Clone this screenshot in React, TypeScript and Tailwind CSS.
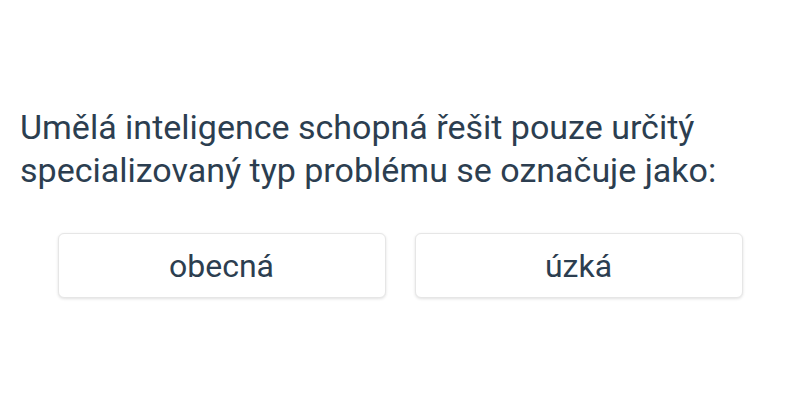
export default function App() {
  const options = ["obecná", "úzká"];
  return (
    <div className="w-[800px] h-[400px] bg-white font-['Roboto',sans-serif] text-[#2c3e50]">
      <div className="pt-[106px] px-5">
        <p className="text-[34px] leading-[43px]">
          Umělá inteligence schopná řešit pouze určitý specializovaný typ problému se označuje jako:
        </p>
        <div className="mt-[41px] flex justify-center gap-[29px]">
          {options.map((o) => (
            <button
              key={o}
              className="w-[328px] h-[65px] rounded-md border border-[#e6e6e6] bg-white shadow-[0_1px_3px_rgba(0,0,0,0.12)] text-[32px] text-[#2c3e50]"
            >
              {o}
            </button>
          ))}
        </div>
      </div>
    </div>
  );
}
